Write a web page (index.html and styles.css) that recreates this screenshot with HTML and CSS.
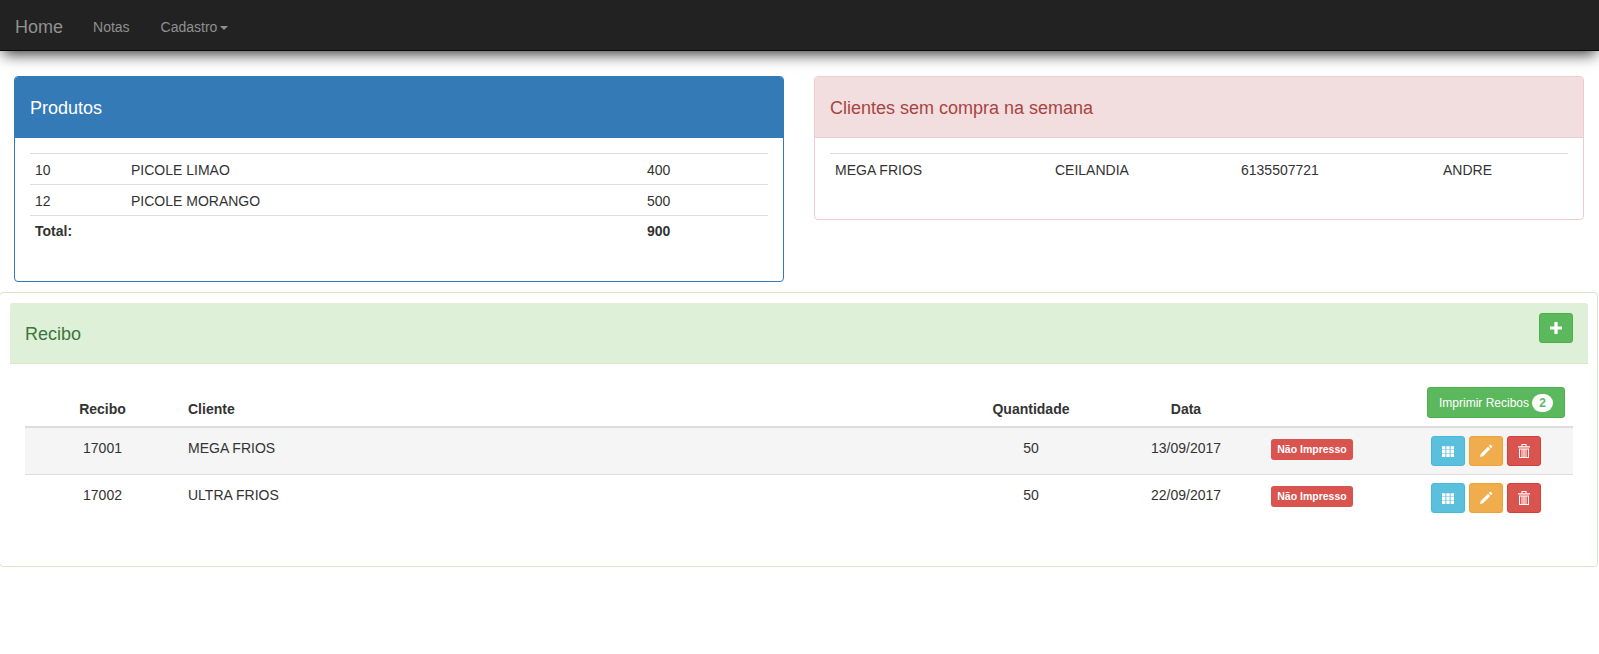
FILE: index.html
```html
<!DOCTYPE html>
<html lang="pt-BR">
<head>
<meta charset="utf-8">
<title>Recibos</title>
<link rel="stylesheet" href="styles.css">
</head>
<body>
<nav class="navbar">
  <a class="brand">Home</a>
  <a class="nav-link">Notas</a>
  <a class="nav-link">Cadastro<span class="caret"></span></a>
</nav>
<div class="top-row">
  <section class="panel panel-primary">
    <h3 class="panel-heading">Produtos</h3>
    <div class="panel-body">
      <table class="table">
        <colgroup><col class="p1"><col class="p2"><col></colgroup>
        <tr><td>10</td><td>PICOLE LIMAO</td><td>400</td></tr>
        <tr><td>12</td><td>PICOLE MORANGO</td><td>500</td></tr>
        <tr class="total"><td>Total:</td><td></td><td>900</td></tr>
      </table>
    </div>
  </section>
  <section class="panel panel-danger">
    <h3 class="panel-heading">Clientes sem compra na semana</h3>
    <div class="panel-body">
      <table class="table">
        <colgroup><col class="c1"><col class="c2"><col class="c3"><col></colgroup>
        <tr><td>MEGA FRIOS</td><td>CEILANDIA</td><td>6135507721</td><td>ANDRE</td></tr>
      </table>
    </div>
  </section>
</div>
<section class="panel panel-success">
  <div class="panel-heading success-heading">
    <h3 class="success-title">Recibo</h3>
    <button class="btn btn-success btn-add" aria-label="Adicionar">
      <svg class="icon" viewBox="0 0 14 14"><path d="M5.4 1h3.2v4.4H13v3.2H8.6V13H5.4V8.6H1V5.4h4.4z"/></svg>
    </button>
  </div>
  <div class="recibo-body">
    <table class="table-recibo">
      <colgroup><col class="r1"><col class="r2"><col class="r3"><col class="r4"><col class="r5"><col></colgroup>
      <thead>
        <tr>
          <th class="center">Recibo</th>
          <th>Cliente</th>
          <th class="center">Quantidade</th>
          <th class="center">Data</th>
          <th></th>
          <th class="print-cell"><button class="btn btn-success btn-print">Imprimir Recibos <span class="badge">2</span></button></th>
        </tr>
      </thead>
      <tbody>
        <tr class="striped">
          <td class="center">17001</td>
          <td>MEGA FRIOS</td>
          <td class="center">50</td>
          <td class="center">13/09/2017</td>
          <td class="control-cell label-cell"><span class="label">Não Impresso</span></td>
          <td class="control-cell">
            <div class="actions">
              <button class="btn btn-info" aria-label="Itens"><svg class="icon" viewBox="0 0 14 14"><path d="M1 2.2h3.4v3.2H1zM5.3 2.2h3.4v3.2H5.3zM9.6 2.2H13v3.2H9.6zM1 6h3.4v3.2H1zM5.3 6h3.4v3.2H5.3zM9.6 6H13v3.2H9.6zM1 9.8h3.4V13H1zM5.3 9.8h3.4V13H5.3zM9.6 9.8H13V13H9.6z"/></svg></button>
              <button class="btn btn-warning" aria-label="Editar"><svg class="icon" viewBox="0 0 14 14"><path d="M1 13l.8-3L9 2.8 11.2 5 4 12.2zM9.8 2L11 .8q.4-.3.8 0l1.4 1.4q.3.4 0 .8L12 4.2z"/></svg></button>
              <button class="btn btn-danger" aria-label="Excluir"><svg class="icon" viewBox="0 0 14 14"><path fill-rule="evenodd" d="M4.5 0h5v2.2H13v1.3H1V2.2h3.5zM5.5 1v1.2h3V1zM2 4.5h10V14H2zM3 5.5V13h1.5V5.5zM5.5 5.5V13h.9V5.5zM7.6 5.5V13h.9V5.5zM9.5 5.5V13H11V5.5z"/></svg></button>
            </div>
          </td>
        </tr>
        <tr>
          <td class="center">17002</td>
          <td>ULTRA FRIOS</td>
          <td class="center">50</td>
          <td class="center">22/09/2017</td>
          <td class="control-cell label-cell"><span class="label">Não Impresso</span></td>
          <td class="control-cell">
            <div class="actions">
              <button class="btn btn-info" aria-label="Itens"><svg class="icon" viewBox="0 0 14 14"><path d="M1 2.2h3.4v3.2H1zM5.3 2.2h3.4v3.2H5.3zM9.6 2.2H13v3.2H9.6zM1 6h3.4v3.2H1zM5.3 6h3.4v3.2H5.3zM9.6 6H13v3.2H9.6zM1 9.8h3.4V13H1zM5.3 9.8h3.4V13H5.3zM9.6 9.8H13V13H9.6z"/></svg></button>
              <button class="btn btn-warning" aria-label="Editar"><svg class="icon" viewBox="0 0 14 14"><path d="M1 13l.8-3L9 2.8 11.2 5 4 12.2zM9.8 2L11 .8q.4-.3.8 0l1.4 1.4q.3.4 0 .8L12 4.2z"/></svg></button>
              <button class="btn btn-danger" aria-label="Excluir"><svg class="icon" viewBox="0 0 14 14"><path fill-rule="evenodd" d="M4.5 0h5v2.2H13v1.3H1V2.2h3.5zM5.5 1v1.2h3V1zM2 4.5h10V14H2zM3 5.5V13h1.5V5.5zM5.5 5.5V13h.9V5.5zM7.6 5.5V13h.9V5.5zM9.5 5.5V13H11V5.5z"/></svg></button>
            </div>
          </td>
        </tr>
      </tbody>
    </table>
  </div>
</section>
</body>
</html>
```
FILE: styles.css
```css
* { box-sizing: border-box; }
html, body { margin: 0; padding: 0; }
body {
  font-family: "Liberation Sans", Arial, sans-serif;
  font-size: 14px;
  line-height: 20px;
  color: #333;
  background: #fff;
  overflow-x: hidden;
}

.navbar {
  display: flex;
  align-items: center;
  height: 51px;
  padding-top: 4px;
  background: #222;
  border-bottom: 1px solid #080808;
  box-shadow: 0 6px 14px -3px rgba(0, 0, 0, 0.8);
}
.brand {
  font-size: 18px;
  color: #909090;
  padding: 0 15px;
}
.nav-link {
  color: #909090;
  padding: 0 15px;
}
.nav-link + .nav-link { margin-left: 1px; }
.caret {
  display: inline-block;
  margin-left: 3px;
  vertical-align: middle;
  border-top: 4px solid #909090;
  border-left: 4px solid transparent;
  border-right: 4px solid transparent;
}

.top-row {
  display: grid;
  grid-template-columns: 770px 770px;
  column-gap: 30px;
  align-items: start;
  padding: 25px 0 0 14px;
}

.panel {
  background: #fff;
  border: 1px solid transparent;
  border-radius: 4px;
}
.panel-heading {
  margin: 0;
  height: 61px;
  padding: 21px 15px 19px;
  font-size: 18px;
  font-weight: 400;
  line-height: 20px;
  border-bottom: 1px solid transparent;
  border-radius: 3px 3px 0 0;
}
.panel-body { padding: 15px; }

.panel-primary { border-color: #337ab7; height: 206px; }
.panel-primary .panel-heading { background: #337ab7; color: #fff; border-color: #337ab7; }
.panel-danger { border-color: #ebccd1; height: 144px; }
.panel-danger .panel-heading { background: #f2dede; color: #a94442; border-color: #ebccd1; }

.table { width: 100%; border-collapse: collapse; table-layout: fixed; }
.table td {
  height: 31px;
  padding: 6px 5px 4px;
  border-top: 1px solid #ddd;
  vertical-align: top;
}
.table .total td { padding: 5px; font-weight: 700; }
.p1 { width: 96px; }
.p2 { width: 516px; }
.c1 { width: 220px; }
.c2 { width: 186px; }
.c3 { width: 202px; }

.panel-success {
  width: 1599px;
  height: 275px;
  margin-top: 10px;
  margin-left: -1px;
  padding-top: 10px;
  border-color: #d6e9c6;
}
.success-heading {
  display: flex;
  justify-content: space-between;
  align-items: flex-start;
  margin: 0 9px 0 10px;
  padding: 10px 15px 0;
  background: #dff0d8;
  color: #3c763d;
  border-color: #d6e9c6;
  border-radius: 3px 3px 0 0;
}
.success-title {
  margin: 11px 0 0;
  font-size: 18px;
  font-weight: 400;
  line-height: 20px;
}
.recibo-body { padding: 16px 24px 0 25px; }

.table-recibo { width: 100%; border-collapse: collapse; table-layout: fixed; }
.table-recibo th {
  height: 47px;
  padding: 8px 8px 7px;
  vertical-align: bottom;
  text-align: left;
  font-weight: 700;
  border-bottom: 2px solid #ddd;
}
.table-recibo td {
  height: 46px;
  padding: 10px 8px 6px;
  vertical-align: top;
  border-bottom: 1px solid #ddd;
}
.table-recibo tbody tr:last-child td { border-bottom: 0; }
.table-recibo th.center, .table-recibo td.center { text-align: center; }
.table-recibo th.print-cell { padding: 0 4px 8px; }
.table-recibo td.control-cell { padding: 8px; }
.table-recibo td.label-cell { padding-left: 6px; }
.striped td { background: #f5f5f5; }
.r1 { width: 155px; }
.r2 { width: 775px; }
.r3 { width: 152px; }
.r4 { width: 158px; }
.r5 { width: 158px; }

.btn {
  display: inline-flex;
  align-items: center;
  justify-content: center;
  margin: 0;
  padding: 0;
  color: #fff;
  font-family: inherit;
  border: 1px solid transparent;
  border-radius: 3px;
}
.btn-success { background: #5cb85c; border-color: #4cae4c; }
.btn-info { background: #5bc0de; border-color: #46b8da; }
.btn-warning { background: #f0ad4e; border-color: #eea236; }
.btn-danger { background: #d9534f; border-color: #d43f3a; }

.btn-add { width: 34px; height: 30px; }
.btn-print {
  width: 138px;
  height: 31px;
  font-size: 12px;
  font-weight: 400;
  gap: 3px;
}
.actions { display: flex; gap: 4px; }
.actions .btn { width: 34px; height: 30px; }
.icon { display: block; width: 14px; height: 14px; fill: #fff; }

.badge {
  display: inline-block;
  min-width: 21px;
  height: 18px;
  padding: 0 7px;
  font-size: 12px;
  font-weight: 700;
  line-height: 18px;
  color: #5cb85c;
  background: #fff;
  border-radius: 10px;
}
.label {
  display: inline-block;
  width: 82px;
  height: 21px;
  margin-top: 3px;
  text-align: center;
  font-size: 10.5px;
  font-weight: 700;
  line-height: 20px;
  color: #fff;
  background: #d9534f;
  border-radius: 3px;
}
```
